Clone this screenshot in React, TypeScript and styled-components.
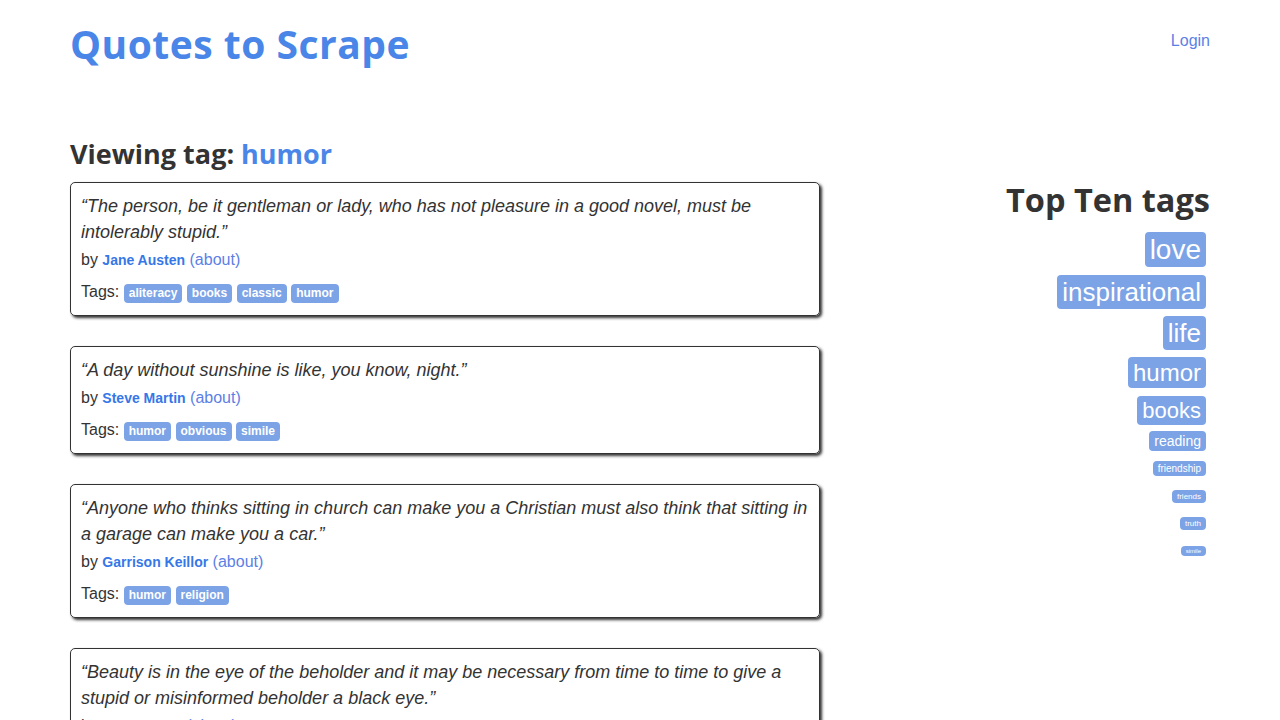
import styled, { createGlobalStyle } from 'styled-components';

const GlobalStyle = createGlobalStyle`
  body {
    margin: 0;
    background: #ffffff;
    color: #333333;
    font-family: "Liberation Sans", Arial, Helvetica, sans-serif;
    font-size: 14px;
    line-height: 1.42857;
  }
  a {
    text-decoration: none;
  }
`;

const Container = styled.div`
  width: 1140px;
  margin: 0 auto;
`;

const Header = styled.header`
  display: flex;
  justify-content: space-between;
  align-items: flex-start;
  padding-top: 22px;
`;

const Logo = styled.h1`
  margin: 0;
  font-family: "Open Sans", sans-serif;
  font-weight: 700;
  font-size: 39px;
  line-height: 43px;
  letter-spacing: 0.5px;

  a {
    color: #4a86e8;
  }
`;

const LoginLink = styled.a`
  display: block;
  margin-top: 7px;
  font-size: 16px;
  line-height: 23px;
  color: #5c7fe6;
`;

const Body = styled.div`
  display: grid;
  grid-template-columns: 750px 360px;
  gap: 30px;
  margin-top: 73px;
`;

const MainColumn = styled.main``;

const ViewingTitle = styled.h3`
  margin: 0 0 13px;
  font-family: "Open Sans", sans-serif;
  font-weight: 700;
  font-size: 27px;
  line-height: 31px;

  a {
    color: #4a86e8;
  }
`;

const QuoteCard = styled.div`
  padding: 10px;
  margin-bottom: 30px;
  border: 1px solid #333333;
  border-radius: 5px;
  box-shadow: 2px 2px 3px #333333;
`;

const QuoteText = styled.span`
  display: block;
  font-size: 18px;
  line-height: 26px;
  font-style: italic;
`;

const Byline = styled.span`
  display: block;
  font-size: 16px;
  line-height: 29px;
`;

const Author = styled.small`
  font-size: 14px;
  line-height: 1;
  font-weight: 700;
  color: #3677e8;
`;

const AboutLink = styled.a`
  color: #5c7fe6;
`;

const TagsRow = styled.div`
  margin-top: 4px;
  font-size: 16px;
  line-height: 27px;
`;

const QuoteTag = styled.a`
  padding: 2px 5px 3px;
  border-radius: 4px;
  background-color: #7ca3e6;
  color: #ffffff;
  font-size: 12px;
  line-height: 1;
  font-weight: 700;
`;

const Sidebar = styled.aside`
  padding-top: 44px;
  text-align: right;
`;

const SidebarTitle = styled.h2`
  margin: 0 0 12px;
  font-family: "Open Sans", sans-serif;
  font-weight: 700;
  font-size: 32.5px;
  line-height: 36px;
`;

const TagItem = styled.div<{ $size: number }>`
  display: block;
  margin-bottom: 4px;
  font-size: ${(p) => p.$size}px;
  line-height: max(23.5px, 1.42857em);
`;

const CloudTag = styled.a`
  padding: 2px 5px;
  margin-right: 4px;
  border-radius: 4px;
  background-color: #7ca3e6;
  color: #ffffff;
`;

type Quote = {
  text: string;
  author: string;
  tags: string[];
};

const quotes: Quote[] = [
  {
    text: '“The person, be it gentleman or lady, who has not pleasure in a good novel, must be intolerably stupid.”',
    author: 'Jane Austen',
    tags: ['aliteracy', 'books', 'classic', 'humor'],
  },
  {
    text: '“A day without sunshine is like, you know, night.”',
    author: 'Steve Martin',
    tags: ['humor', 'obvious', 'simile'],
  },
  {
    text: '“Anyone who thinks sitting in church can make you a Christian must also think that sitting in a garage can make you a car.”',
    author: 'Garrison Keillor',
    tags: ['humor', 'religion'],
  },
  {
    text: '“Beauty is in the eye of the beholder and it may be necessary from time to time to give a stupid or misinformed beholder a black eye.”',
    author: 'Jim Henson',
    tags: ['humor'],
  },
  {
    text: '“All you need is love. But a little chocolate now and then doesn\'t hurt.”',
    author: 'Charles M. Schulz',
    tags: ['chocolate', 'food', 'humor'],
  },
];

const topTags = [
  { name: 'love', size: 28 },
  { name: 'inspirational', size: 26 },
  { name: 'life', size: 26 },
  { name: 'humor', size: 24 },
  { name: 'books', size: 22 },
  { name: 'reading', size: 14 },
  { name: 'friendship', size: 10 },
  { name: 'friends', size: 8 },
  { name: 'truth', size: 8 },
  { name: 'simile', size: 6 },
];

const App = () => {
  return (
    <>
      <GlobalStyle />
      <Container>
        <Header>
          <Logo>
            <a href="#">Quotes to Scrape</a>
          </Logo>
          <LoginLink href="#">Login</LoginLink>
        </Header>
        <Body>
          <MainColumn>
            <ViewingTitle>
              Viewing tag: <a href="#">humor</a>
            </ViewingTitle>
            {quotes.map((quote) => (
              <QuoteCard key={quote.author}>
                <QuoteText>{quote.text}</QuoteText>
                <Byline>
                  by <Author>{quote.author}</Author> <AboutLink href="#">(about)</AboutLink>
                </Byline>
                <TagsRow>
                  Tags:{' '}
                  {quote.tags.map((tag) => (
                    <span key={tag}>
                      <QuoteTag href="#">{tag}</QuoteTag>{' '}
                    </span>
                  ))}
                </TagsRow>
              </QuoteCard>
            ))}
          </MainColumn>
          <Sidebar>
            <SidebarTitle>Top Ten tags</SidebarTitle>
            {topTags.map((tag) => (
              <TagItem key={tag.name} $size={tag.size}>
                <CloudTag href="#">{tag.name}</CloudTag>
              </TagItem>
            ))}
          </Sidebar>
        </Body>
      </Container>
    </>
  );
};

export default App;
